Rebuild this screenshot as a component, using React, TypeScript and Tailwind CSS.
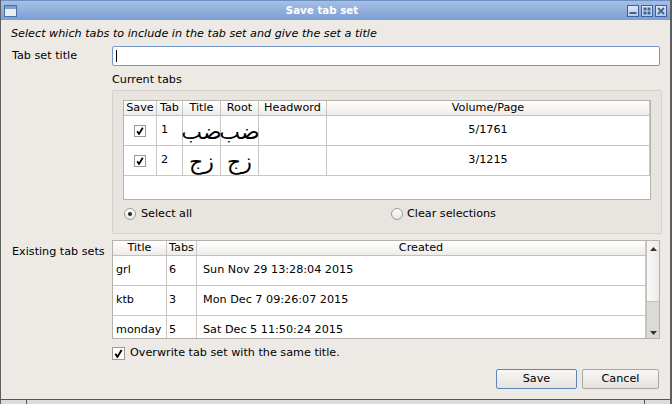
import React from "react";

const font = "font-['DejaVu_Sans',sans-serif]";

function Check({ size = 10 }: { size?: number }) {
  return (
    <span
      className="flex shrink-0 items-center justify-center border border-[#9c9a96] bg-white"
      style={{ width: size + 2, height: size + 2 }}
    >
      <svg width={size - 2} height={size - 2} viewBox="0 0 8 8">
        <path d="M1.2 4.2 L3 7 L6.8 0.8" fill="none" stroke="#000" strokeWidth="1.7" />
      </svg>
    </span>
  );
}

function Radio({ checked }: { checked?: boolean }) {
  return (
    <span className="flex h-[12px] w-[12px] shrink-0 items-center justify-center rounded-full border border-[#9e9b96] bg-gradient-to-b from-white to-[#e9e7e3]">
      {checked && <span className="h-[4px] w-[4px] rounded-full bg-[#222]" />}
    </span>
  );
}

function TitleButton({ kind }: { kind: "min" | "max" | "close" }) {
  return (
    <span className="flex h-[12px] w-[12px] items-center justify-center border border-[#3f6399] bg-gradient-to-b from-[#dfe8f5] to-[#b8cbe6]">
      <svg width="8" height="8" viewBox="0 0 8 8">
        {kind === "min" && <rect x="0.5" y="5" width="7" height="2" fill="#3f6399" />}
        {kind === "max" && (
          <g fill="#3f6399">
            <rect x="0.5" y="0.5" width="3" height="3" />
            <rect x="4.5" y="0.5" width="3" height="3" />
            <rect x="0.5" y="4.5" width="3" height="3" />
            <rect x="4.5" y="4.5" width="3" height="3" />
          </g>
        )}
        {kind === "close" && (
          <path d="M1 1 L7 7 M7 1 L1 7" stroke="#3f6399" strokeWidth="1.8" />
        )}
      </svg>
    </span>
  );
}

const headerCell =
  "flex h-full items-center justify-center border-r border-[#c9c6c1] bg-gradient-to-b from-white to-[#eeece9]";

const currentTabs = [
  { tab: "1", title: "ضب", root: "ضب", page: "5/1761" },
  { tab: "2", title: "زج", root: "زج", page: "3/1215" },
];

const tabSets = [
  { title: "grl", tabs: "6", created: "Sun Nov 29 13:28:04 2015" },
  { title: "ktb", tabs: "3", created: "Mon Dec 7 09:26:07 2015" },
  { title: "monday", tabs: "5", created: "Sat Dec 5 11:50:24 2015" },
];

export default function App() {
  return (
    <div
      className={`${font} flex h-[404px] w-[672px] flex-col overflow-hidden border-l border-r-2 border-[#5e5e5e] bg-[#edeae6] text-[11.2px] text-black`}
    >
      {/* Title bar */}
      <div className="relative flex h-[20px] shrink-0 items-center border-t border-[#6d8fc4] bg-gradient-to-b from-[#a6bfe4] to-[#7d9ed3] px-[3px]">
        <span className="flex h-[12px] w-[13px] flex-col border border-[#4a6ea8] bg-[#e9edf3]">
          <span className="h-[3px] bg-[#7f9fcf]" />
        </span>
        <span className="flex-1 text-center text-[10.3px] font-bold text-white">
          Save tab set
        </span>
        <div className="flex gap-[2px]">
          <TitleButton kind="min" />
          <TitleButton kind="max" />
          <TitleButton kind="close" />
        </div>
      </div>

      {/* Body */}
      <div className="flex flex-1 flex-col pl-[10px] pr-[10px]">
        <div className="mt-[7px] flex h-[15px] items-center italic">
          Select which tabs to include in the tab set and give the set a title
        </div>

        <div className="mt-[4px] flex h-[20px] items-center">
          <span className="w-[101px] pl-px">Tab set title</span>
          <div className="flex h-full flex-1 items-center rounded-[2px] border border-[#7698c6] bg-white pl-[3px]">
            <span className="h-[12px] w-px bg-black" />
          </div>
        </div>

        <div className="ml-[101px] mt-[6px] flex h-[16px] items-center">Current tabs</div>

        <div className="ml-[101px] mt-[2px] flex h-[144px] w-[550px] flex-col rounded-[2px] border border-[#d4d0ca] bg-[#e8e5e0] px-[10px] pt-[9px]">
          {/* Current tabs table */}
          <div className="flex h-[100px] flex-col border border-[#b5b2ad] bg-white">
            <div className="flex h-[15px] shrink-0 border-b border-[#c4c1bc]">
              <div className={`${headerCell} w-[33px]`}>Save</div>
              <div className={`${headerCell} w-[26px]`}>Tab</div>
              <div className={`${headerCell} w-[38px]`}>Title</div>
              <div className={`${headerCell} w-[38px]`}>Root</div>
              <div className={`${headerCell} w-[68px]`}>Headword</div>
              <div className={`${headerCell} flex-1`}>Volume/Page</div>
            </div>
            {currentTabs.map((r) => (
              <div key={r.tab} className="flex h-[30px] shrink-0 border-b border-[#c9c6c1]">
                <div className="flex w-[33px] items-center justify-center border-r border-[#c9c6c1]">
                  <Check />
                </div>
                <div className="flex w-[26px] items-center border-r border-[#c9c6c1] pl-[4px]">
                  {r.tab}
                </div>
                <div className="flex w-[38px] items-center justify-center border-r border-[#c9c6c1] pt-[2px] text-[22px] leading-[26px]">
                  {r.title}
                </div>
                <div className="flex w-[38px] items-center justify-center border-r border-[#c9c6c1] pt-[2px] text-[22px] leading-[26px]">
                  {r.root}
                </div>
                <div className="w-[68px] border-r border-[#c9c6c1]" />
                <div className="flex flex-1 items-center justify-center border-r border-[#c9c6c1]">
                  {r.page}
                </div>
              </div>
            ))}
          </div>

          <div className="mt-[6px] flex h-[16px] items-center">
            <div className="flex w-[268px] items-center gap-[5px] pl-px">
              <Radio checked />
              <span>Select all</span>
            </div>
            <div className="flex items-center gap-[4px]">
              <Radio />
              <span>Clear selections</span>
            </div>
          </div>
        </div>

        {/* Existing tab sets */}
        <div className="mt-[6px] flex h-[99px]">
          <span className="w-[101px] pl-px pt-[4px]">Existing tab sets</span>
          <div className="flex flex-1 border border-[#b5b2ad] bg-white">
            <div className="flex flex-1 flex-col overflow-hidden">
              <div className="flex h-[15px] shrink-0 border-b border-[#c4c1bc]">
                <div className={`${headerCell} w-[54px]`}>Title</div>
                <div className={`${headerCell} w-[30px]`}>Tabs</div>
                <div className={`${headerCell} flex-1`}>Created</div>
              </div>
              {tabSets.map((s) => (
                <div key={s.title} className="flex h-[30px] shrink-0 border-b border-[#c9c6c1]">
                  <div className="flex w-[54px] items-center border-r border-[#c9c6c1] pl-[3px]">
                    {s.title}
                  </div>
                  <div className="flex w-[30px] items-center border-r border-[#c9c6c1] pl-[2px]">
                    {s.tabs}
                  </div>
                  <div className="flex flex-1 items-center border-r border-[#c9c6c1] pl-[6px]">
                    {s.created}
                  </div>
                </div>
              ))}
            </div>
            {/* Scrollbar */}
            <div className="flex w-[13px] flex-col border-l border-[#c4c1bc] bg-[#dcdad6]">
              <div className="flex h-[15px] items-center justify-center bg-gradient-to-r from-[#f7f6f4] to-[#ecebe8]">
                <svg width="7" height="4" viewBox="0 0 7 4">
                  <path d="M0 4 L3.5 0 L7 4 Z" fill="#333" />
                </svg>
              </div>
              <div className="h-[46px] border-b border-[#c4c1bc] bg-gradient-to-r from-[#fbfaf9] to-[#ecebe8]" />
              <div className="flex-1" />
              <div className="flex h-[10px] items-center justify-center">
                <svg width="7" height="4" viewBox="0 0 7 4">
                  <path d="M0 0 L3.5 4 L7 0 Z" fill="#333" />
                </svg>
              </div>
            </div>
          </div>
        </div>

        <div className="ml-[101px] mt-[7px] flex h-[14px] items-center gap-[5px]">
          <Check size={11} />
          <span>Overwrite tab set with the same title.</span>
        </div>

        <div className="mt-[9px] flex justify-end gap-[5px] pr-px">
          <button className="h-[20px] w-[81px] rounded-[2px] border border-[#5f86b9] bg-gradient-to-b from-[#f8f7f5] to-[#e5e3df]">
            Save
          </button>
          <button className="h-[20px] w-[77px] rounded-[2px] border border-[#aaa7a2] bg-gradient-to-b from-[#f8f7f5] to-[#e5e3df]">
            Cancel
          </button>
        </div>
      </div>

      {/* Bottom frame */}
      <div className="flex h-[5px] shrink-0 border-t border-[#555] bg-[#dcdcdc]">
        <span className="w-[26px] border-r border-[#555]" />
        <span className="flex-1" />
        <span className="w-[26px] border-l border-[#555]" />
      </div>
    </div>
  );
}
